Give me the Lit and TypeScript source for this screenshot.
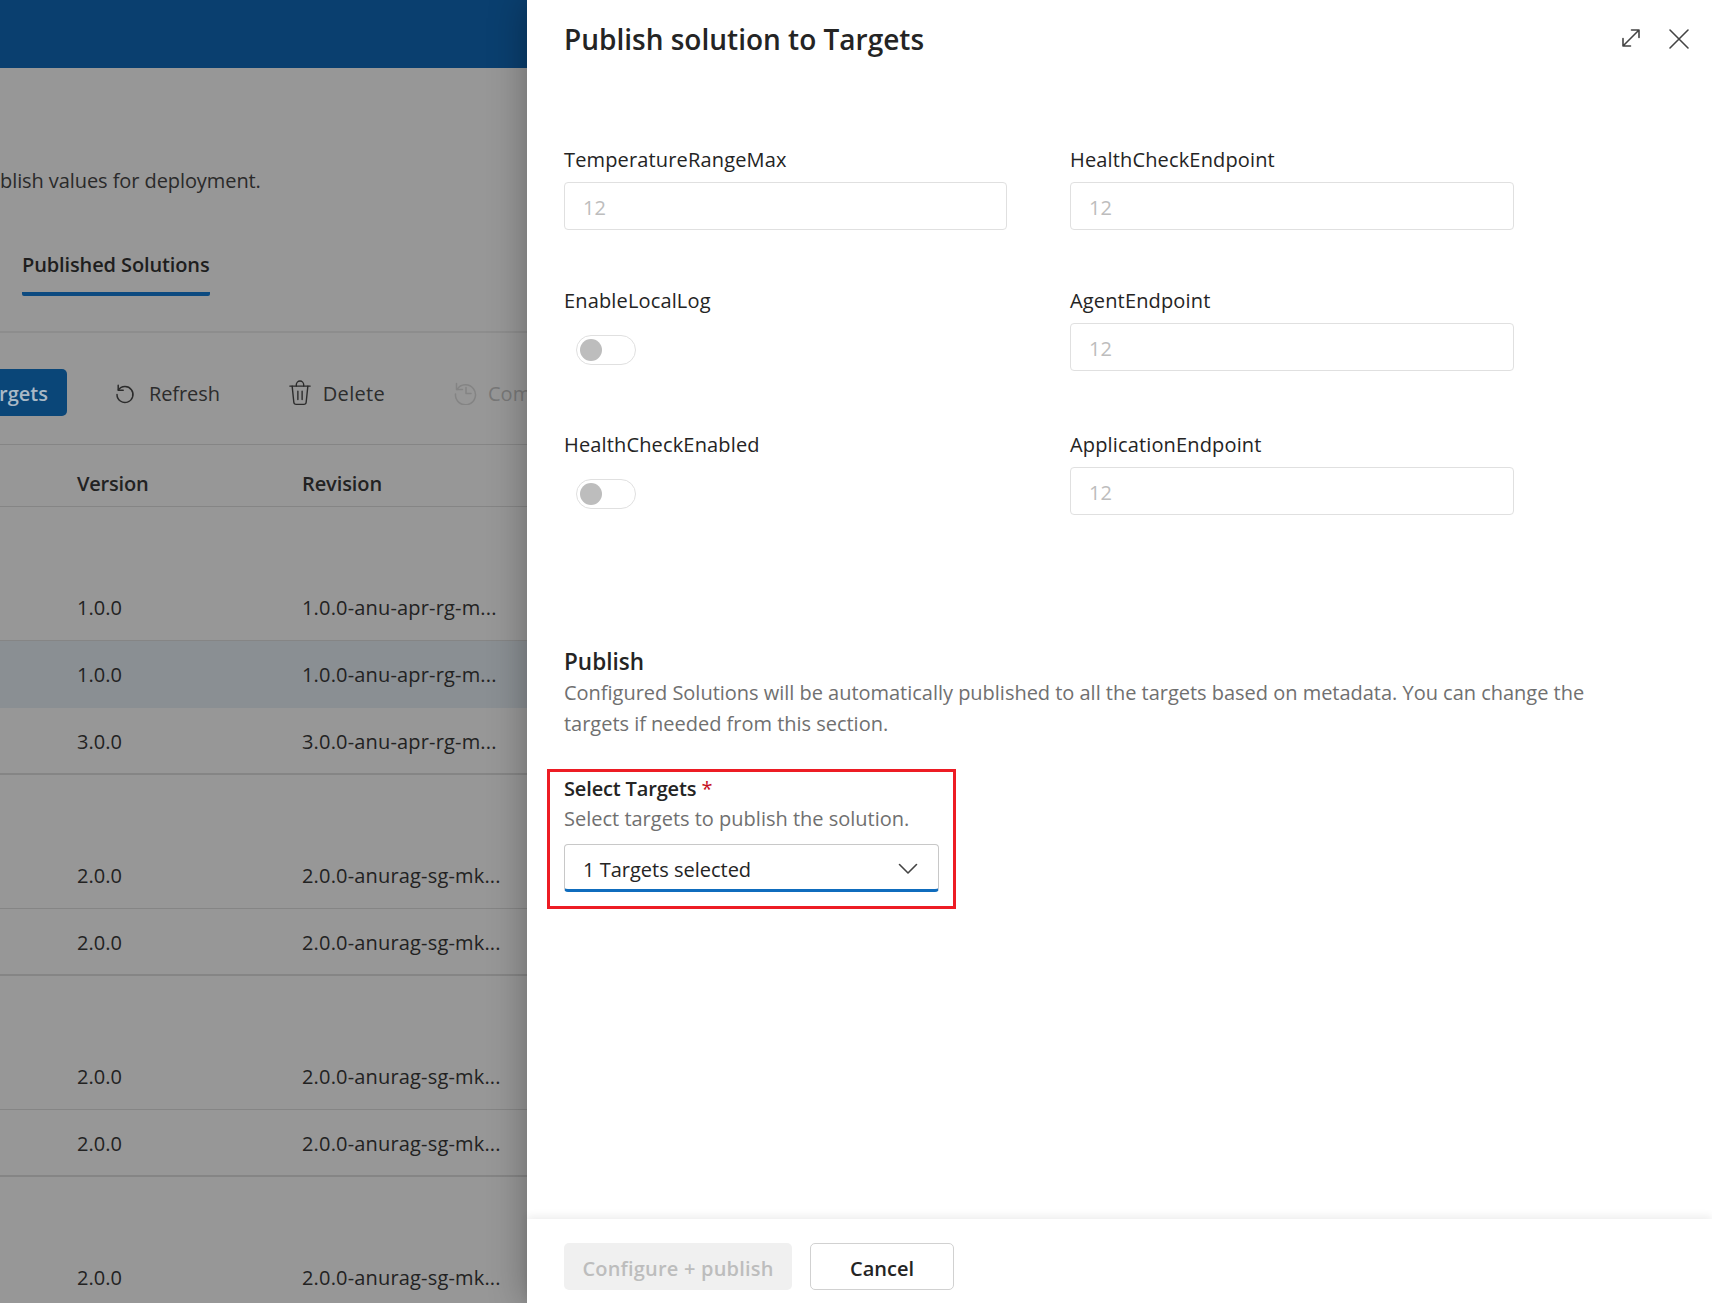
import { LitElement, html, css, svg } from "lit";
import { customElement } from "lit/decorators.js";

type Row = { v?: string; r?: string; sel?: boolean; thick?: boolean };
const rows: Row[] = [
  {},
  { v: "1.0.0", r: "1.0.0-anu-apr-rg-m..." },
  { v: "1.0.0", r: "1.0.0-anu-apr-rg-m...", sel: true },
  { v: "3.0.0", r: "3.0.0-anu-apr-rg-m...", thick: true },
  {},
  { v: "2.0.0", r: "2.0.0-anurag-sg-mk..." },
  { v: "2.0.0", r: "2.0.0-anurag-sg-mk...", thick: true },
  {},
  { v: "2.0.0", r: "2.0.0-anurag-sg-mk..." },
  { v: "2.0.0", r: "2.0.0-anurag-sg-mk...", thick: true },
  {},
  { v: "2.0.0", r: "2.0.0-anurag-sg-mk..." },
];

const refreshIcon = svg`<path d="M5.2 4.2v5h5" /><path d="M5.4 9A8 8 0 1 1 4 13.5" />`;
const trashIcon = svg`<path d="M2 5.5h22" /><path d="M9 5.5V4a4 4 0 0 1 8 0v1.5" /><path d="M4.5 5.5 6.3 23a2.6 2.6 0 0 0 2.6 2.3h8.2a2.6 2.6 0 0 0 2.6-2.3l1.8-17.5" /><path d="M10.7 11v9M15.3 11v9" />`;
const historyIcon = svg`<path d="M2.5 2.5v6h6" /><path d="M3 8.5A10 10 0 1 1 1.5 13" /><path d="M12 6.5V12.500h5" />`;

@customElement("app-root")
export class AppRoot extends LitElement {
  static styles = css`
    :host {
      display: flex;
      width: 1712px;
      height: 1303px;
      overflow: hidden;
      font-family: "Open Sans", "Noto Sans", sans-serif;
      font-size: 20px;
      color: #242424;
      background: #fff;
    }
    .page {
      width: 527px;
      flex: none;
      height: 1303px;
      overflow: hidden;
      background: #979797;
      color: #1e1e1e;
    }
    .topbar { height: 68px; background: #0a3f6f; }
    .intro { height: 263px; box-sizing: border-box; padding-top: 98px; }
    .subtitle { line-height: 30px; color: #2a2a2a; white-space: nowrap; letter-spacing: -0.08px; }
    .tab {
      display: inline-block;
      margin: 54px 0 0 22px;
      font-weight: 600;
      line-height: 30px;
      padding-bottom: 12px;
      border-bottom: 4px solid #0c4a80;
      border-radius: 0 0 2px 2px;
      white-space: nowrap;
      letter-spacing: -0.12px;
    }
    .toolbar {
      height: 114px;
      box-sizing: border-box;
      border-top: 2px solid #8d8d8d;
      border-bottom: 1px solid #858585;
      padding-top: 36px;
      display: flex;
      align-items: flex-start;
      white-space: nowrap;
    }
    .primary {
      width: 67px;
      height: 47px;
      flex: none;
      background: #0a4678;
      border-radius: 0 5px 5px 0;
      color: #a9b9c6;
      font-weight: 600;
      display: flex;
      align-items: center;
      justify-content: flex-end;
      padding: 2px 19px 0 0;
      box-sizing: border-box;
    }
    .tool { display: flex; align-items: center; height: 48px; color: #2c2c2c; flex: none; }
    .tool svg { fill: none; stroke: currentColor; stroke-width: 1.5; stroke-linecap: round; stroke-linejoin: round; flex: none; }
    .refresh { margin-left: 46px; gap: 12px; letter-spacing: -0.1px; }
    .delete { margin-left: 68px; gap: 11px; letter-spacing: 0.3px; }
    .compare { margin-left: 69px; gap: 10px; color: #787878; }
    .compare svg { stroke: #848484; }
    .row {
      display: flex;
      height: 67px;
      box-sizing: border-box;
      border-bottom: 1px solid #858585;
      align-items: center;
      white-space: nowrap;
      color: #222;
    }
    .row.head { height: 62px; font-weight: 600; align-items: flex-start; padding-top: 24px; line-height: 30px; letter-spacing: -0.2px; }
    .row.sel { background: #8a8f93; border-bottom-color: #8a8f93; }
    .row.thick { border-bottom: 2px solid #858585; padding-top: 2px; }
    .row.blank, .row.last { border-bottom: none; }
    .c1 { width: 302px; padding-left: 77px; box-sizing: border-box; flex: none; }
    .c2 { flex: none; letter-spacing: 0.17px; }
    .head .c2 { letter-spacing: -0.1px; }
    .drawer {
      flex: 1;
      height: 1303px;
      background: #fff;
      box-shadow: 0 0 36px rgba(0, 0, 0, 0.32);
      display: flex;
      flex-direction: column;
      position: relative;
    }
    .header {
      height: 80px;
      box-sizing: border-box;
      padding: 19px 22px 0 37px;
      display: flex;
      justify-content: space-between;
      align-items: flex-start;
    }
    h1 { margin: 0; font-size: 28px; font-weight: 600; line-height: 40px; color: #242424; }
    .actions { display: flex; align-items: center; gap: 27px; height: 38px; margin-top: 1px; }
    .actions svg { fill: none; stroke: #444; stroke-width: 1.6; stroke-linecap: round; stroke-linejoin: round; display: block; }
    .actions .expand { margin-bottom: 3px; }
    .body { flex: 1; padding: 65px 0 0 37px; }
    .grid {
      display: grid;
      grid-template-columns: 443px 444px;
      grid-template-rows: 85px 88px 85px;
      column-gap: 63px;
      row-gap: 56px;
    }
    .label { line-height: 28px; padding-top: 1px; font-weight: 500; color: #242424; white-space: nowrap; letter-spacing: 0.15px; }
    .input {
      margin-top: 8px;
      height: 48px;
      box-sizing: border-box;
      border: 1px solid #e0e0e0;
      border-radius: 4px;
      padding-left: 18px;
      line-height: 49px;
      color: #bdbdbd;
    }
    .toggle {
      margin: 20px 0 0 12px;
      width: 60px;
      height: 30px;
      box-sizing: border-box;
      border: 1px solid #e0e0e0;
      border-radius: 15px;
      padding: 3px 0 0 3px;
    }
    .knob { width: 22px; height: 22px; border-radius: 50%; background: #bdbdbd; }
    h2 { margin: 131px 0 0; font-size: 22.500px; font-weight: 600; line-height: 32px; color: #242424; }
    .desc { margin: 0; line-height: 30.500px; color: #707070; white-space: nowrap; letter-spacing: -0.02px; }
    .mark {
      margin: 30px 0 0 -17px;
      width: 409px;
      box-sizing: border-box;
      border: 3px solid #ed1c24;
      padding: 2px 14px 14px;
    }
    .mark .label { font-weight: 600; letter-spacing: -0.15px; }
    .req { color: #c50f1f; font-weight: 400; }
    .hint { margin-top: 2px; line-height: 28px; color: #707070; white-space: nowrap; }
    .select {
      margin-top: 11px;
      height: 48px;
      box-sizing: border-box;
      border: 1px solid #c8c8c8;
      border-bottom: 3px solid #0f6cbd;
      border-radius: 4px;
      padding: 5px 20px 0 18px;
      display: flex;
      align-items: center;
      justify-content: space-between;
    }
    .select svg { fill: none; stroke: #444; stroke-width: 1.6; stroke-linecap: round; stroke-linejoin: round; display: block; margin-bottom: 2px; }
    .footer {
      height: 84px;
      box-sizing: border-box;
      padding: 24px 0 0 37px;
      display: flex;
      gap: 18px;
      align-items: flex-start;
      box-shadow: 0 -3px 8px rgba(0, 0, 0, 0.07);
    }
    .btn {
      height: 47px;
      box-sizing: border-box;
      border-radius: 5px;
      display: flex;
      align-items: center;
      justify-content: center;
      font-weight: 600;
      padding-top: 3px;
    }
    .btn.off { width: 228px; background: #f0f0f0; color: #bdbdbd; letter-spacing: 0.2px; }
    .btn.cancel { width: 144px; border: 1px solid #d1d1d1; color: #242424; }
  `;

  private field(label: string) {
    return html`<div><div class="label">${label}</div><div class="input">12</div></div>`;
  }
  private toggle(label: string) {
    return html`<div><div class="label">${label}</div><div class="toggle"><div class="knob"></div></div></div>`;
  }

  render() {
    return html`
      <div class="page">
        <div class="topbar"></div>
        <div class="intro">
          <div class="subtitle">blish values for deployment.</div>
          <div class="tab">Published Solutions</div>
        </div>
        <div class="toolbar">
          <div class="primary">rgets</div>
          <div class="tool refresh">
            <svg width="24" height="24" viewBox="0 0 24 24">${refreshIcon}</svg><span>Refresh</span>
          </div>
          <div class="tool delete">
            <svg width="24" height="27" viewBox="0 0 26 27">${trashIcon}</svg><span>Delete</span>
          </div>
          <div class="tool compare">
            <svg width="24" height="24" viewBox="0 0 24 24">${historyIcon}</svg><span>Compare</span>
          </div>
        </div>
        <div class="row head"><div class="c1">Version</div><div class="c2">Revision</div></div>
        ${rows.map(
          (r, i) => html`<div class="row ${r.sel ? "sel" : ""} ${r.thick ? "thick" : ""} ${r.v ? "" : "blank"} ${i === rows.length - 1 ? "last" : ""}">
            <div class="c1">${r.v ?? ""}</div><div class="c2">${r.r ?? ""}</div>
          </div>`
        )}
      </div>
      <div class="drawer">
        <div class="header">
          <h1>Publish solution to Targets</h1>
          <div class="actions">
            <svg class="expand" width="20" height="20" viewBox="0 0 20 20">
              <path d="M2 18 18 2M10.500 2H18V9.500M2 10.500V18H9.500" />
            </svg>
            <svg width="22" height="22" viewBox="0 0 22 22"><path d="M2 2 20 20M20 2 2 20" /></svg>
          </div>
        </div>
        <div class="body">
          <div class="grid">
            ${this.field("TemperatureRangeMax")} ${this.field("HealthCheckEndpoint")}
            ${this.toggle("EnableLocalLog")} ${this.field("AgentEndpoint")}
            ${this.toggle("HealthCheckEnabled")} ${this.field("ApplicationEndpoint")}
          </div>
          <h2>Publish</h2>
          <p class="desc">
            Configured Solutions will be automatically published to all the targets based on metadata. You can change the<br />targets if needed from this section.
          </p>
          <div class="mark">
            <div class="label">Select Targets<span class="req"> *</span></div>
            <div class="hint">Select targets to publish the solution.</div>
            <div class="select">
              <span>1 Targets selected</span>
              <svg width="20" height="12" viewBox="0 0 20 12"><path d="M1.500 1.500 10 10l8.500-8.500" /></svg>
            </div>
          </div>
        </div>
        <div class="footer">
          <div class="btn off">Configure + publish</div>
          <div class="btn cancel">Cancel</div>
        </div>
      </div>
    `;
  }
}
